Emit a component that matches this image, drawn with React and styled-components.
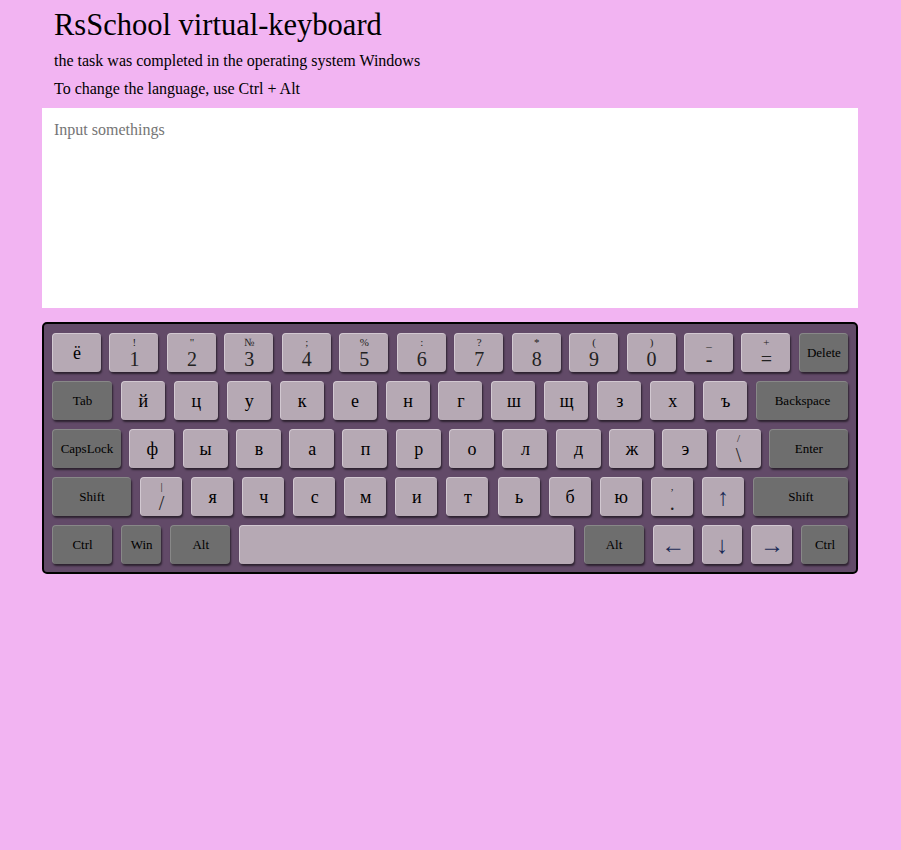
import React from 'react';
import styled, { createGlobalStyle } from 'styled-components';

const GlobalStyle = createGlobalStyle`
  html, body {
    margin: 0;
    padding: 0;
    background: #f2b4f2;
  }
  body {
    font-family: "Liberation Serif", "Times New Roman", serif;
    color: #000;
  }
`;

const rows = [
  [
    { main: 'ё', w: 49 },
    { main: '1', top: '!', w: 49 },
    { main: '2', top: '"', w: 49 },
    { main: '3', top: '№', w: 49 },
    { main: '4', top: ';', w: 49 },
    { main: '5', top: '%', w: 49 },
    { main: '6', top: ':', w: 49 },
    { main: '7', top: '?', w: 49 },
    { main: '8', top: '*', w: 49 },
    { main: '9', top: '(', w: 49 },
    { main: '0', top: ')', w: 49 },
    { main: '-', top: '_', w: 49 },
    { main: '=', top: '+', w: 49 },
    { main: 'Delete', w: 49, special: true },
  ],
  [
    { main: 'Tab', w: 60, special: true },
    ...'йцукенгшщзхъ'.split('').map((c) => ({ main: c, w: 44 })),
    { main: 'Backspace', w: 92, special: true },
  ],
  [
    { main: 'CapsLock', w: 69, special: true },
    ...'фывапролджэ'.split('').map((c) => ({ main: c, w: 45 })),
    { main: '\\', top: '/', w: 45 },
    { main: 'Enter', w: 79, special: true },
  ],
  [
    { main: 'Shift', w: 79, special: true },
    { main: '/', top: '|', w: 42 },
    ...'ячсмитьбю'.split('').map((c) => ({ main: c, w: 42 })),
    { main: '.', top: ',', w: 42 },
    { main: '↑', w: 42, arrow: true },
    { main: 'Shift', w: 95, special: true },
  ],
  [
    { main: 'Ctrl', w: 60, special: true },
    { main: 'Win', w: 40, special: true },
    { main: 'Alt', w: 60, special: true },
    { main: '', w: 335 },
    { main: 'Alt', w: 60, special: true },
    { main: '←', w: 40, arrow: true },
    { main: '↓', w: 40, arrow: true },
    { main: '→', w: 41, arrow: true },
    { main: 'Ctrl', w: 47, special: true },
  ],
];

const App = () => {
  return (
    <>
      <GlobalStyle />
      <Page>
        <Header>
          <Title>RsSchool virtual-keyboard</Title>
          <Note>the task was completed in the operating system Windows</Note>
          <Note>To change the language, use Ctrl + Alt</Note>
        </Header>
        <TextArea placeholder="Input somethings" />
        <Keyboard>
          {rows.map((row, i) => (
            <Row key={i}>
              {row.map((k, j) => (
                <Key
                  key={j}
                  $special={k.special}
                  style={{ width: `${k.w}px` }}
                >
                  {k.top && <TopSymbol>{k.top}</TopSymbol>}
                  <MainSymbol
                    $special={k.special}
                    $digit={!!k.top}
                    $arrow={k.arrow}
                  >
                    {k.main}
                  </MainSymbol>
                </Key>
              ))}
            </Row>
          ))}
        </Keyboard>
      </Page>
    </>
  );
};

export default App;

const Page = styled.div`
  width: 816px;
  margin-left: 42px;
  display: flex;
  flex-direction: column;
`;

const Header = styled.div`
  display: flex;
  flex-direction: column;
  gap: 10px;
  padding: 8px 12px 0;
`;

const Title = styled.h1`
  margin: 0;
  font-size: 30.5px;
  line-height: 34px;
  font-weight: 400;
`;

const Note = styled.p`
  margin: 0;
  font-size: 16px;
  line-height: 18px;
`;

const TextArea = styled.textarea`
  margin-top: 10px;
  height: 200px;
  box-sizing: border-box;
  border: none;
  outline: none;
  resize: none;
  padding: 13px 12px 10px;
  background: #fff;
  font-family: inherit;
  font-size: 16px;
  line-height: 18px;

  &::placeholder {
    color: #757575;
  }
`;

const Keyboard = styled.div`
  margin-top: 14px;
  border: 2px solid #000;
  border-radius: 5px;
  background: #624a68;
  padding: 9px 8px 8px;
  display: flex;
  flex-direction: column;
  gap: 9px;
`;

const Row = styled.div`
  display: flex;
  justify-content: space-between;
  height: 39px;
`;

const Key = styled.div`
  box-sizing: border-box;
  height: 39px;
  border-radius: 4px;
  background: ${(p) => (p.$special ? '#6e6e6e' : '#b6a9b4')};
  border-top: 1px solid ${(p) => (p.$special ? '#888' : '#d2c8d1')};
  border-left: 1px solid ${(p) => (p.$special ? '#888' : '#d2c8d1')};
  box-shadow: 1px 2px 2px rgba(0, 0, 0, 0.55);
  display: flex;
  flex-direction: column;
  align-items: center;
  justify-content: center;
  gap: 2px;
  color: #000;
`;

const TopSymbol = styled.span`
  font-size: 11px;
  line-height: 11px;
  color: #222;
`;

const MainSymbol = styled.span`
  font-size: ${(p) =>
    p.$special ? '13px' : p.$arrow ? '24px' : p.$digit ? '20px' : '18px'};
  line-height: ${(p) => (p.$digit ? '19px' : '20px')};
  color: ${(p) => (p.$arrow ? '#1a2a55' : p.$digit ? '#222' : '#000')};
`;
